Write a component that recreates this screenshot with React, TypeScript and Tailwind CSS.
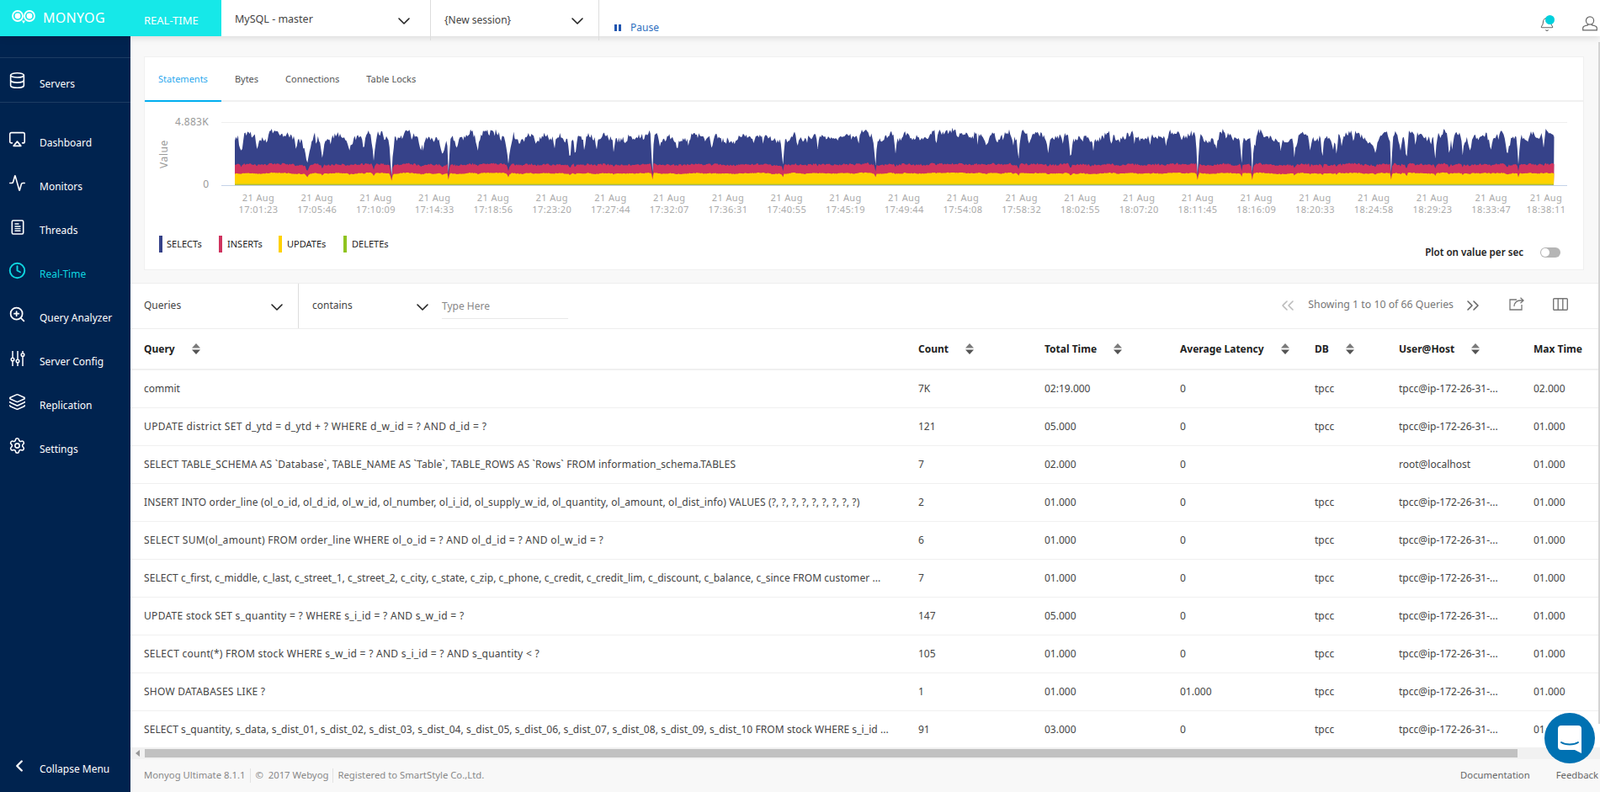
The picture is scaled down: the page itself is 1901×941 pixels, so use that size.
import { useMemo } from "react";
import {
  Activity, Airplay, Bell, ChevronDown, ChevronLeft, ChevronsLeft, ChevronsRight,
  Clock, Database, Layers, Settings, ZoomIn,
} from "lucide-react";

// ── Data ─────────────────────────────────────────────────────────────────────

const times = [
  "17:01:23", "17:05:46", "17:10:09", "17:14:33", "17:18:56", "17:23:20", "17:27:44", "17:32:07",
  "17:36:31", "17:40:55", "17:45:19", "17:49:44", "17:54:08", "17:58:32", "18:02:55", "18:07:20",
  "18:11:45", "18:16:09", "18:20:33", "18:24:58", "18:29:23", "18:33:47", "18:38:11",
];

const rows = [
  { track: "", cells: ["commit", "7K", "02:19.000", "0", "tpcc", "tpcc@ip-172-26-31-...", "02.000"] },
  { track: "tracking-[0.38px]", cells: ["UPDATE district SET d_ytd = d_ytd + ? WHERE d_w_id = ? AND d_id = ?", "121", "05.000", "0", "tpcc", "tpcc@ip-172-26-31-...", "01.000"] },
  { track: "tracking-[0.16px]", cells: ["SELECT TABLE_SCHEMA AS `Database`, TABLE_NAME AS `Table`, TABLE_ROWS AS `Rows` FROM information_schema.TABLES", "7", "02.000", "0", "", "root@localhost", "01.000"] },
  { track: "tracking-[0.14px]", cells: ["INSERT INTO order_line (ol_o_id, ol_d_id, ol_w_id, ol_number, ol_i_id, ol_supply_w_id, ol_quantity, ol_amount, ol_dist_info) VALUES (?, ?, ?, ?, ?, ?, ?, ?, ?)", "2", "01.000", "0", "tpcc", "tpcc@ip-172-26-31-...", "01.000"] },
  { track: "tracking-[0.32px]", cells: ["SELECT SUM(ol_amount) FROM order_line WHERE ol_o_id = ? AND ol_d_id = ? AND ol_w_id = ?", "6", "01.000", "0", "tpcc", "tpcc@ip-172-26-31-...", "01.000"] },
  { track: "tracking-[0.06px]", cells: ["SELECT c_first, c_middle, c_last, c_street_1, c_street_2, c_city, c_state, c_zip, c_phone, c_credit, c_credit_lim, c_discount, c_balance, c_since FROM customer ...", "7", "01.000", "0", "tpcc", "tpcc@ip-172-26-31-...", "01.000"] },
  { track: "tracking-[0.3px]", cells: ["UPDATE stock SET s_quantity = ? WHERE s_i_id = ? AND s_w_id = ?", "147", "05.000", "0", "tpcc", "tpcc@ip-172-26-31-...", "01.000"] },
  { track: "tracking-[0.27px]", cells: ["SELECT count(*) FROM stock WHERE s_w_id = ? AND s_i_id = ? AND s_quantity < ?", "105", "01.000", "0", "tpcc", "tpcc@ip-172-26-31-...", "01.000"] },
  { track: "tracking-[0.25px]", cells: ["SHOW DATABASES LIKE ?", "1", "01.000", "01.000", "tpcc", "tpcc@ip-172-26-31-...", "01.000"] },
  { track: "tracking-[0.07px]", cells: ["SELECT s_quantity, s_data, s_dist_01, s_dist_02, s_dist_03, s_dist_04, s_dist_05, s_dist_06, s_dist_07, s_dist_08, s_dist_09, s_dist_10 FROM stock WHERE s_i_id ...", "91", "03.000", "0", "tpcc", "tpcc@ip-172-26-31-...", "01.000"] },
];

// big dips read off the chart: [x, depth, half width]
const bigDips: [number, number, number][] = [
  [287, 0.6, 3], [365, 0.75, 7], [383, 0.6, 5], [415, 0.45, 5], [444, 0.7, 5], [465, 1, 4], [500, 0.45, 4],
  [526, 0.6, 7], [533, 1, 2.5], [604, 0.75, 6], [677, 0.7, 3], [683, 0.55, 3], [775, 1, 2.5], [930, 0.8, 3],
  [1040, 0.8, 3], [1210, 0.7, 3], [1272, 0.75, 3], [1423, 1, 3], [1475, 0.8, 2.5], [1488, 1, 2.5],
  [1538, 0.7, 2.5], [1571, 0.7, 2.5], [1588, 0.6, 2.5], [1634, 0.55, 8], [1653, 1, 2.5], [1671, 0.8, 3],
  [1705, 0.7, 2.5], [1722, 0.7, 2.5], [1738, 0.6, 2.5], [1771, 0.5, 3], [1791, 0.6, 3], [1804, 0.75, 3],
];

function makeSeries() {
  let seed = 20170821;
  const rnd = () => {
    seed = (seed + 0x6d2b79f5) | 0;
    let t = Math.imul(seed ^ (seed >>> 15), 1 | seed);
    t = (t + Math.imul(t ^ (t >>> 7), 61 | t)) ^ t;
    return ((t ^ (t >>> 14)) >>> 0) / 4294967296;
  };
  const dips = [...bigDips];
  for (let x = 285; x < 1840; x += 10 + rnd() * 18) dips.push([x, 0.1 + rnd() * 0.4, 1.5 + rnd() * 2.5]);

  const x0 = 279, x1 = 1846, step = 1.25;
  const n = Math.ceil((x1 - x0) / step);
  const slow = Array.from({ length: n + 12 }, () => rnd());
  const pts: { x: number; navy: number; red: number; yellow: number }[] = [];
  for (let i = 0; i <= n; i++) {
    const x = x0 + i * step;
    const k = i / 7;
    const a = Math.floor(k);
    const f = k - a;
    const s = slow[a] * (1 - f) + slow[a + 1] * f;
    let d = 0;
    for (const [dx, depth, w] of dips) {
      const q = 1 - Math.abs(x - dx) / w;
      if (q > 0) d = Math.max(d, depth * Math.pow(q, 1.2));
    }
    const navyH = (25 + s * 10 + rnd() * 7) * (1 - d);
    const fall = 1 - 0.88 * Math.pow(d, 3);
    const redH = (21 + s * 2 + rnd() * 2.5) * fall;
    const yellowH = (11.5 + s * 1.5 + rnd()) * fall;
    pts.push({ x, navy: 218.6 - redH - navyH, red: 218.6 - redH, yellow: 218.6 - yellowH });
  }
  const area = (key: "navy" | "red" | "yellow") =>
    `M${x0} 219.5 ` + pts.map((p) => `L${p.x.toFixed(1)} ${p[key].toFixed(1)}`).join(" ") + ` L${x1} 219.5 Z`;
  return { navy: area("navy"), red: area("red"), yellow: area("yellow") };
}

// ── Small drawings ───────────────────────────────────────────────────────────

function Logo() {
  return (
    <svg width="28" height="17" viewBox="0 0 28 17" fill="none" className="shrink-0">
      <circle cx="7" cy="7" r="6" stroke="white" strokeWidth="1.8" />
      <circle cx="21" cy="7" r="6" stroke="white" strokeWidth="1.8" />
      <circle cx="7" cy="7" r="3.4" fill="white" />
      <circle cx="21" cy="7" r="3.4" fill="white" />
      <path d="M12 12.5h4l-2 3.5z" fill="white" />
    </svg>
  );
}

function ThreadsIcon() {
  return (
    <svg width="18" height="18" viewBox="0 0 18 18" fill="none" stroke="currentColor" strokeWidth="1.6">
      <rect x="2.3" y="1" width="13.4" height="16" rx="1.5" />
      <path d="M5.5 5h5M5.5 8h7M5.5 10.6h7M5.5 13.2h7" strokeWidth="1.4" />
    </svg>
  );
}

function SlidersIcon() {
  return (
    <svg width="18" height="18" viewBox="0 0 18 18" fill="none" stroke="currentColor" strokeWidth="1.5">
      <path d="M3 0v8M3 12v6M9 0v10M9 14v4M15 0v2M15 7v11" />
      <circle cx="3" cy="10" r="1.8" />
      <circle cx="9" cy="12" r="1.8" />
      <circle cx="15" cy="4.5" r="1.8" />
    </svg>
  );
}

function SortIcon() {
  return (
    <svg width="10" height="13" viewBox="0 0 10 13" className="ml-[20px] shrink-0">
      <path d="M5 0l5 5.5H0z" fill="#7a7a7a" />
      <path d="M5 13L0 7.5h10z" fill="#555" />
    </svg>
  );
}

function UserIcon() {
  return (
    <svg width="18" height="18" viewBox="0 0 18 18" fill="none" stroke="#666" strokeWidth="1.2">
      <circle cx="9" cy="5.5" r="4.6" />
      <path d="M6.5 9.5v1.4c-2.5.4-5.8 1.2-5.8 3.4v2.6h16.6v-2.6c0-2.2-3.3-3-5.8-3.4V9.5" />
    </svg>
  );
}

function Dropdown({ className, label }: { className: string; label: string }) {
  return (
    <div className={`flex items-center ${className}`}>
      <span className="text-[#444]">{label}</span>
      <ChevronDown className="ml-auto mt-[3px] w-[24px] h-[24px] text-[#222]" strokeWidth={1.6} />
    </div>
  );
}

function NavItem({ icon, label, active }: { icon: React.ReactNode; label: string; active?: boolean }) {
  return (
    <div className={`flex items-center h-[52px] pl-3 text-[12px] ${active ? "text-[#0fd6e0]" : "text-white"}`}>
      <span className="w-[35px] h-[18px] -mt-[8px] shrink-0">{icon}</span>
      <span>{label}</span>
    </div>
  );
}

const navIcon = "w-[21px] h-[21px] -ml-[2px] -mt-[2px]";

// ── Component ────────────────────────────────────────────────────────────────

export default function App() {
  const series = useMemo(makeSeries, []);
  const cols = ["w-[920px]", "w-[150px]", "w-[161px]", "w-[160px]", "w-[100px]", "w-[160px]", "w-[90px]"];
  const heads = ["Query", "Count", "Total Time", "Average Latency", "DB", "User@Host", "Max Time"];

  return (
    <div className="relative flex flex-col w-[1901px] h-[941px] overflow-hidden bg-[#f8f8f8] font-['Open_Sans',sans-serif] text-[12px]">
      {/* Top bar */}
      <div className="relative z-10 flex items-start h-[43px] shrink-0 bg-white shadow-[0_2px_8px_rgba(0,0,0,0.12)]">
        <div className="flex items-center h-[43px] w-[263px] shrink-0 bg-[#16e8e8] text-white">
          <div className="ml-[14px] mt-[-3px]"><Logo /></div>
          <span className="ml-[9px] mt-[-2px] w-[120px] text-[16px] tracking-[0.3px]">MONYOG</span>
          <span className="mt-[6px] text-[13px]">REAL-TIME</span>
        </div>
        <div className="flex items-center h-[48px] w-[249px] shrink-0 pl-4 pr-[19px] border-r border-[#ddd] pb-[1px] text-[12.5px]">
          <Dropdown className="w-full" label="MySQL - master" />
        </div>
        <div className="flex items-center h-[48px] w-[200px] shrink-0 pl-4 pr-[13px] border-r border-[#ddd] pb-[1px] text-[12px]">
          <Dropdown className="w-full" label="{New session}" />
        </div>
        <div className="flex items-center h-[43px] pl-[18px] pt-[22px] text-[12px] text-[#2f6fc0]">
          <span className="flex gap-[2px] mr-[11px]">
            <span className="w-[3px] h-[8px] bg-[#1f55b0]" />
            <span className="w-[3px] h-[8px] bg-[#1f55b0]" />
          </span>
          Pause
        </div>
        <div className="relative ml-auto mt-[20px] mr-[17px]">
          <Bell className="w-[18px] h-[18px] text-[#666]" strokeWidth={1.4} />
          <span className="absolute -top-[2px] left-[7px] w-[11px] h-[11px] rounded-full bg-[#00d0dc]" />
        </div>
        <div className="mt-[19px] mr-[3px] ml-[16px]"><UserIcon /></div>
      </div>

      <div className="flex flex-1 min-h-0">
        {/* Sidebar */}
        <div className="flex flex-col w-[155px] shrink-0 bg-[#00234f] pt-[25px] pb-[1px]">
          <div className="border-y border-[#1d3c63] h-[54px] pt-[5px] mb-[22px]">
            <NavItem icon={<Database className={navIcon} strokeWidth={1.8} />} label="Servers" />
          </div>
          <NavItem icon={<Airplay className={navIcon} strokeWidth={1.8} />} label="Dashboard" />
          <NavItem icon={<Activity className={navIcon} strokeWidth={1.8} />} label="Monitors" />
          <NavItem icon={<ThreadsIcon />} label="Threads" />
          <NavItem active icon={<Clock className={navIcon} strokeWidth={2.2} />} label="Real-Time" />
          <NavItem icon={<ZoomIn className={navIcon} strokeWidth={2} />} label="Query Analyzer" />
          <NavItem icon={<SlidersIcon />} label="Server Config" />
          <NavItem icon={<Layers className={navIcon} strokeWidth={1.8} />} label="Replication" />
          <NavItem icon={<Settings className={navIcon} strokeWidth={1.8} />} label="Settings" />
          <div className="mt-auto">
            <NavItem icon={<ChevronLeft className="w-[22px] h-[22px] -mt-[2px]" strokeWidth={2.6} />} label="Collapse Menu" />
          </div>
        </div>

        {/* Main */}
        <div className="flex flex-col flex-1 min-w-0">
          {/* Chart card */}
          <div className="ml-4 mr-[19px] mt-6 mb-[15px] h-[254px] shrink-0 bg-white border border-[#f0f0f0]">
            <div className="flex h-[53px] border-b-2 border-[#f0f0f0] text-[11px] text-[#555]">
              <div className="h-[53px] px-4 pt-[18px] text-[#2ea9ee] border-b-2 border-[#00aeef]">Statements</div>
              <div className="px-4 pt-[18px]">Bytes</div>
              <div className="px-4 pt-[18px]">Connections</div>
              <div className="px-4 pt-[18px]">Table Locks</div>
            </div>
            <svg width="1709" height="145" viewBox="172 121 1709 145" className="block">
              <line x1="263" x2="1862" y1="145.5" y2="145.5" stroke="#eeeeee" />
              <path d={series.navy} fill="#364289" />
              <path d={series.red} fill="#cf335f" />
              <path d={series.yellow} fill="#ffd200" />
              <rect x="279" y="218.6" width="1567" height="1" fill="#9ccb3b" />
              <line x1="263" x2="1862" y1="220.5" y2="220.5" stroke="#c4d2e8" />
              <text x="248" y="149" textAnchor="end" fontSize="12" fill="#999" letterSpacing="0.3">4.883K</text>
              <text x="248" y="223" textAnchor="end" fontSize="12" fill="#999">0</text>
              <text x="199" y="183" textAnchor="middle" fontSize="12" fill="#999" letterSpacing="0.6" transform="rotate(-90 199 183)">Value</text>
              {times.map((t, i) => {
                const cx = i === times.length - 1 ? 1837 : 307 + i * 69.75;
                return (
                  <text key={t} textAnchor="middle" fontSize="11" fill="#aaa" letterSpacing="0.4">
                    <tspan x={cx} y="239">21 Aug</tspan>
                    <tspan x={cx} y="253">{t}</tspan>
                  </text>
                );
              })}
            </svg>
            <div className="flex items-start justify-between mt-[14px] pl-[17px] pr-[27px] text-[11px] text-[#222]">
              <div className="flex h-[20px] items-center">
                <span className="w-[4px] h-[20px] mr-[5px] bg-[#364289]" /><span className="w-[62px]">SELECTs</span>
                <span className="w-[4px] h-[20px] mr-[6px] bg-[#cf335f]" /><span className="w-[61px]">INSERTs</span>
                <span className="w-[4px] h-[20px] mr-[6px] bg-[#ffd200]" /><span className="w-[67px]">UPDATEs</span>
                <span className="w-[4px] h-[20px] mr-[6px] bg-[#8fc31f]" /><span>DELETEs</span>
              </div>
              <div className="flex items-center mt-[11px] text-[11.6px] font-semibold text-[#222]">
                Plot on value per sec
                <span className="ml-[20px] flex items-center w-[24px] h-[12px] rounded-full bg-[#b5b5b5] px-[1px]">
                  <span className="w-[10px] h-[10px] rounded-full bg-white" />
                </span>
              </div>
            </div>
          </div>

          {/* Queries */}
          <div className="flex flex-col flex-1 min-h-0 bg-white border-t border-[#eeeeee]">
            <div className="flex items-start h-[54px] shrink-0 border-b border-[#eeeeee] pl-4 text-[#444]">
              <Dropdown className="w-[184px] h-[53px] pr-[13px] border-r border-[#ddd] pb-[1px]" label="Queries" />
              <Dropdown className="w-[159px] h-[53px] pl-4 pb-[1px]" label="contains" />
              <div className="ml-[11px] mt-[14px] w-[150px] h-[28px] pt-[4px] border-b border-[#e8e8e8] text-[#888]">Type Here</div>
              <div className="flex items-center h-[53px] ml-auto pb-[2px] text-[#777]">
                <ChevronsLeft className="w-[24px] h-[24px] text-[#bbb]" strokeWidth={1.6} />
                <span className="ml-[12px] mr-[11px] text-[12.3px]">Showing 1 to 10 of 66 Queries</span>
                <ChevronsRight className="w-[24px] h-[24px] text-[#666]" strokeWidth={1.6} />
                <svg width="18" height="16" viewBox="0 0 18 16" fill="none" stroke="#777" strokeWidth="1.3" className="ml-[31px] mb-[3px]">
                  <path d="M9 3H1v12h14V9" />
                  <path d="M6 11c0-4 3-7 7-7h4M13.5 0.8L17 4l-3.5 3.2" />
                </svg>
                <svg width="18" height="15" viewBox="0 0 18 15" fill="none" stroke="#777" strokeWidth="1.4" className="ml-[34px] mr-[38px] mb-[3px]">
                  <rect x="0.7" y="0.7" width="16.6" height="13.6" rx="1" />
                  <path d="M6.2 0.7v13.6M11.8 0.7v13.6" />
                </svg>
              </div>
            </div>

            <div className="flex-1 min-h-0 overflow-hidden">
              <div className="flex items-center h-[49px] w-[1760px] pl-4 border-b-2 border-[#f0f0f0] font-bold text-[#222]">
                {heads.map((h, i) => (
                  <div key={h} className={`flex items-center shrink-0 ${cols[i]}`}>
                    <span>{h}</span>
                    {i < 6 && <SortIcon />}
                  </div>
                ))}
              </div>
              {rows.map((r, i) => (
                <div key={i} className="flex items-center h-[45px] w-[1760px] pl-4 border-b border-[#f0f0f0] text-[#444]">
                  {r.cells.map((c, j) => (
                    <div key={j} className={`shrink-0 whitespace-nowrap overflow-hidden ${cols[j]} ${j === 0 ? r.track : ""}`}>{c}</div>
                  ))}
                </div>
              ))}
            </div>

            {/* Horizontal scrollbar */}
            <div className="flex items-center h-[14px] shrink-0 bg-[#f1f1f1]">
              <span className="ml-[6px] w-0 h-0 border-y-[4px] border-y-transparent border-r-[5px] border-r-[#999]" />
              <span className="ml-[6px] w-[1631px] h-[10px] bg-[#c1c1c1]" />
            </div>
          </div>

          {/* Footer */}
          <div className="flex items-center h-[39px] shrink-0 pl-4 pr-[2px] text-[11.3px] text-[#888]">
            <span className="pr-[6px] border-r border-[#e2e2e2]">Monyog Ultimate 8.1.1</span>
            <span className="px-[5px] border-r border-[#e2e2e2]">©&nbsp;&nbsp;2017 Webyog</span>
            <span className="pl-[5px]">Registered to SmartStyle Co.,Ltd.</span>
            <span className="ml-auto text-[#666]">Documentation</span>
            <span className="ml-[31px] text-[#666]">Feedback</span>
          </div>
        </div>
      </div>

      {/* Vertical scrollbar sliver */}
      <div className="absolute right-0 top-[50px] w-[2px] h-[810px] bg-[#d4d4d4]" />

      {/* Chat launcher */}
      <div className="absolute right-[6px] bottom-[34px] flex items-center justify-center w-[60px] h-[60px] rounded-full bg-[#0071b2]">
        <svg width="28" height="33" viewBox="0 0 28 33" className="mt-[2px]">
          <path d="M4 0h20a4 4 0 0 1 4 4v29l-8-4H4a4 4 0 0 1-4-4V4a4 4 0 0 1 4-4z" fill="white" />
          <path d="M4 20c5 3.4 15 3.4 20 0" fill="none" stroke="#0071b2" strokeWidth="2" strokeLinecap="round" />
        </svg>
      </div>
    </div>
  );
}
